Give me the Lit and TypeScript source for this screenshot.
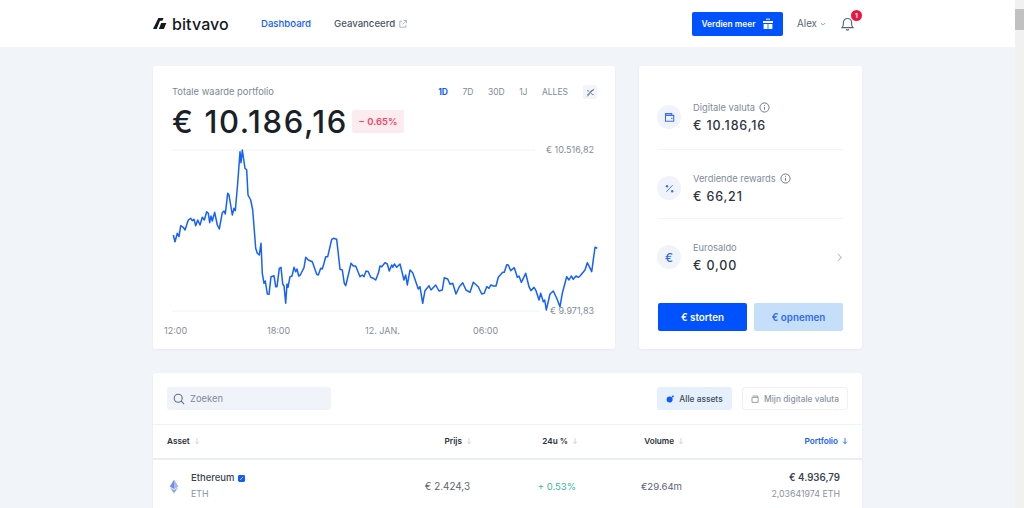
import {LitElement, css, html, svg} from 'lit';
import {customElement} from 'lit/decorators.js';

// traced from the chart, in page pixels x3: [x, y] pairs relative to (160,140) and (380,140)
const LEFT = [40,285,45,305,52,280,57,290,62,257,70,262,75,270,85,240,92,235,97,242,102,238,107,257,113,240,120,255,127,232,133,240,140,215,145,220,149,248,153,228,157,243,164,217,172,255,178,267,187,218,192,213,196,222,203,160,207,165,217,225,222,205,226,212,233,130,240,35,243,68,247,30,255,85,260,90,264,165,272,180,278,210,287,325,292,340,298,345,303,310,307,400,312,430,316,423,322,462,327,463,333,410,342,407,347,440,351,440,358,385,363,382,368,432,372,437,377,490,381,432,384,442,390,410,396,408,402,382,407,395,411,387,416,408,421,405,432,383,437,352,445,360,457,365,470,403,475,405,482,385,487,387,492,370,497,350,503,350,515,298,520,295,530,298,540,388,547,390,553,430,557,437,565,405,573,370,580,378,587,378,600,410,607,405,612,410,618,393,625,395,632,412,640,415,647,420,655,400];
const RIGHT = [0,378,5,380,15,368,22,372,28,393,35,375,38,382,43,372,50,382,60,372,72,420,77,405,82,435,90,390,98,398,115,447,120,440,128,490,135,452,147,437,153,450,167,435,177,453,187,450,193,413,203,417,210,433,218,430,228,462,238,440,248,428,258,450,270,457,280,427,295,440,305,462,313,460,320,440,327,445,332,435,340,438,348,438,355,412,368,397,373,397,380,374,385,375,392,392,403,383,412,412,417,408,424,427,430,415,437,400,447,440,453,452,462,442,468,452,477,480,482,460,490,485,494,480,499,510,510,462,520,453,530,475,540,500,547,460,560,410,567,420,574,408,580,418,588,408,595,412,600,408,615,390,622,368,635,395,645,322,652,325];

function toPoints(src: number[], ox: number) {
	const out: string[] = [];
	for (let i = 0; i < src.length; i += 2) {
		out.push(`${(ox + src[i] / 3).toFixed(1)},${(src[i + 1] / 3).toFixed(1)}`);
	}
	return out.join(' ');
}

// chart box starts at x=153, y=140 on the page
const LINE = `${toPoints(LEFT, 7)} ${toPoints(RIGHT, 227)}`;

const infoIcon = html`<svg class="info" viewBox="0 0 12 12" fill="none" stroke="#5f6f82" stroke-width="1">
	<circle cx="6" cy="6" r="5"></circle>
	<path d="M6 5.4v3M6 3.4v.9"></path>
</svg>`;

const sortIcon = (color = '#c3ccd8') => html`<svg class="sort" viewBox="0 0 8 10" fill="none" stroke=${color} stroke-width="1.1">
	<path d="M4 1v7.5M1.6 6L4 8.5 6.4 6"></path>
</svg>`;

@customElement('app-root')
export class AppRoot extends LitElement {
	static styles = css`
		:host {
			display: flex;
			width: 1024px;
			height: 508px;
			overflow: hidden;
			background: #f1f4f9;
			color: #1c222b;
			font-family: Inter, 'Liberation Sans', sans-serif;
			font-size: 10px;
		}

		.page {
			width: 1015px;
			flex: none;
		}

		.scrollbar {
			width: 9px;
			flex: none;
			background: #f1f1f1;
			padding-top: 9px;
			box-sizing: border-box;
		}

		.thumb {
			height: 21px;
			background: #c1c1c1;
		}

		header {
			height: 47px;
			background: #fff;
			display: flex;
			justify-content: center;
		}

		.bar {
			width: 709px;
			display: flex;
			align-items: center;
		}

		.logo {
			display: flex;
			align-items: center;
			gap: 5px;
			width: 108px;
			font-size: 16px;
			font-weight: 500;
			letter-spacing: 0.1px;
			color: #15191f;
		}

		.logo svg {
			width: 14px;
			height: 11px;
		}

		.nav {
			font-size: 9.6px;
			font-weight: 500;
			color: #4c5561;
			display: flex;
			align-items: center;
			gap: 4px;
		}

		.nav.active {
			color: #0f5cff;
			width: 73px;
		}

		.nav svg {
			width: 8px;
			height: 8px;
		}

		.right {
			margin-left: auto;
			display: flex;
			align-items: center;
		}

		.earn {
			width: 91px;
			height: 24px;
			border-radius: 2px;
			background: #0051ff;
			color: #fff;
			font-weight: 600;
			font-size: 8.4px;
			display: flex;
			align-items: center;
			justify-content: center;
			gap: 6px;
		}

		.earn svg {
			width: 12px;
			height: 12px;
		}

		.user {
			margin-left: 14px;
			width: 44px;
			display: flex;
			align-items: center;
			gap: 3px;
			color: #5a6470;
			font-size: 9.8px;
		}

		.user svg {
			width: 6px;
			height: 6px;
		}

		.bell {
			position: relative;
			width: 21px;
			height: 14px;
			margin-top: 1px;
		}

		.bell svg {
			width: 13px;
			height: 14px;
		}

		.badge {
			position: absolute;
			left: 10px;
			top: -7px;
			width: 11px;
			height: 11px;
			border-radius: 50%;
			background: #e8173f;
			color: #fff;
			font-size: 6.5px;
			font-weight: 700;
			display: flex;
			align-items: center;
			justify-content: center;
		}

		main {
			width: 709px;
			margin: 19px auto 0;
			display: flex;
			flex-direction: column;
			gap: 24px;
		}

		.top {
			display: flex;
			gap: 24px;
			height: 283px;
		}

		.card {
			background: #fff;
			border-radius: 3px;
			box-shadow: 0 1px 3px rgba(40, 60, 90, 0.05);
		}

		.portfolio {
			width: 462px;
			position: relative;
		}

		.head {
			padding: 19px 19px 0;
			height: 55px;
		}

		.head-top {
			display: flex;
			align-items: center;
			height: 14px;
		}

		.title {
			color: #7d8896;
			font-size: 9.4px;
			margin-bottom: 2px;
		}

		.tabs {
			margin-left: auto;
			margin-right: -1px;
			display: flex;
			align-items: center;
			color: #808b99;
			font-size: 8.5px;
		}

		.tabs span {
			margin-right: 14.5px;
		}

		.tabs .on {
			color: #0f5cff;
			font-weight: 700;
		}

		.tabs .last {
			margin-right: 15px;
		}

		.chart-toggle {
			width: 14px;
			height: 14px;
			border-radius: 2px;
			background: #f1f4f9;
			display: flex;
			align-items: center;
			justify-content: center;
		}

		.chart-toggle svg {
			width: 9px;
			height: 9px;
		}

		.value-row {
			display: flex;
			align-items: center;
			gap: 4px;
			margin-top: 5px;
		}

		.value {
			font-size: 31px;
			font-weight: 500;
			letter-spacing: 1.65px;
			line-height: 36px;
			color: #1a2028;
		}

		.change {
			width: 52px;
			height: 23px;
			margin-top: -2px;
			border-radius: 2px;
			background: #fdecef;
			color: #f0476a;
			font-weight: 600;
			font-size: 9.5px;
			display: flex;
			align-items: center;
			justify-content: center;
		}

		.chart {
			position: absolute;
			left: 0;
			top: 74px;
			width: 462px;
			height: 209px;
		}

		.chart svg {
			position: absolute;
			left: 0;
			top: 0;
			width: 462px;
			height: 209px;
		}

		.tick {
			position: absolute;
			color: #838d99;
			font-size: 9px;
			line-height: 12px;
			white-space: nowrap;
		}

		.balances {
			width: 223px;
			padding: 19px 19px 18px 18px;
			box-sizing: border-box;
			display: flex;
			flex-direction: column;
		}

		.balance {
			height: 65px;
			box-sizing: border-box;
			display: flex;
			align-items: center;
			gap: 12px;
			border-bottom: 1px solid #f3f5f8;
		}

		.balance + .balance {
			height: 69px;
			padding-top: 8px;
		}

		.balance.last {
			border-bottom: none;
			height: 76px;
			padding-top: 0;
		}

		.round {
			width: 24px;
			height: 24px;
			border-radius: 50%;
			background: #f0f3f9;
			display: flex;
			align-items: center;
			justify-content: center;
			color: #2f6bf5;
			font-size: 12px;
			font-weight: 500;
			flex: none;
		}

		.round svg {
			width: 11px;
			height: 11px;
		}

		.label {
			color: #808b99;
			font-size: 9.3px;
			display: flex;
			align-items: center;
			gap: 4px;
			line-height: 14px;
		}

		.info {
			width: 11px;
			height: 11px;
		}

		.amount {
			font-size: 12.5px;
			font-weight: 500;
			letter-spacing: 0.85px;
			color: #2c333d;
			line-height: 16px;
			margin-top: 3px;
		}

		.chev {
			margin-left: auto;
			width: 7px;
			height: 9px;
		}

		.actions {
			margin: auto 0 0 1px;
			display: flex;
			gap: 7px;
		}

		.btn {
			flex: 1;
			height: 28px;
			border-radius: 2px;
			background: #0051ff;
			color: #fff;
			font-weight: 600;
			font-size: 9.8px;
			display: flex;
			align-items: center;
			justify-content: center;
		}

		.btn.light {
			background: #c5dffa;
			color: #2f6bf0;
		}

		.assets {
			height: 200px;
		}

		.tools {
			height: 52px;
			padding: 14px 14px 0;
			box-sizing: border-box;
			display: flex;
			border-bottom: 1px solid #eff2f6;
		}

		.search {
			width: 164px;
			height: 23px;
			border-radius: 3px;
			background: #f0f3f9;
			display: flex;
			align-items: center;
			gap: 5px;
			padding-left: 6px;
			box-sizing: border-box;
			color: #808b99;
			font-size: 9.4px;
		}

		.search svg {
			width: 12px;
			height: 12px;
		}

		.filter {
			height: 23px;
			border-radius: 3px;
			box-sizing: border-box;
			display: flex;
			align-items: center;
			justify-content: center;
			gap: 5px;
			font-size: 8.4px;
			font-weight: 500;
		}

		.filter.on {
			margin-left: auto;
			width: 75px;
			background: #e5f0fc;
			color: #414b57;
		}

		.filter.off {
			margin-left: 10px;
			width: 106px;
			border: 1px solid #eef1f5;
			color: #8b95a2;
		}

		.filter svg {
			width: 8px;
			height: 8px;
		}

		.grid {
			display: grid;
			grid-template-columns: 1fr 106px 106px 106px 164px;
			padding: 0 14px;
			justify-items: end;
			align-items: center;
			box-sizing: border-box;
		}

		.cols {
			height: 35px;
			padding-bottom: 1px;
			border-bottom: 2px solid #e9eef4;
			font-size: 8.2px;
			font-weight: 600;
			color: #2b323b;
		}

		.col {
			display: flex;
			align-items: center;
			gap: 4px;
		}

		.col:first-child {
			justify-self: start;
		}

		.col.blue {
			color: #0f5cff;
		}

		.sort {
			width: 6px;
			height: 8px;
		}

		.row {
			height: 52px;
			font-size: 9.9px;
			color: #5b6570;
		}

		.price {
			padding-right: 2px;
		}

		.name {
			justify-self: start;
			display: flex;
			align-items: center;
			gap: 12px;
		}

		.name > svg {
			width: 10px;
			height: 15px;
			margin-left: 2px;
		}

		.coin {
			font-weight: 500;
			font-size: 9.5px;
			color: #3c444f;
			display: flex;
			align-items: center;
			gap: 3px;
			line-height: 14px;
		}

		.coin svg {
			width: 7px;
			height: 7px;
		}

		.sym {
			color: #8a94a0;
			font-size: 8.8px;
			line-height: 14px;
			margin-top: 2px;
		}

		.up {
			color: #35b99a;
			font-size: 9.5px;
			padding-right: 2px;
		}

		.vol {
			font-size: 9.6px;
			padding-right: 2px;
		}

		.hold {
			text-align: right;
			padding-right: 8px;
		}

		.hold b {
			display: block;
			font-weight: 600;
			font-size: 9.7px;
			color: #3c444f;
			line-height: 14px;
		}

		.hold span {
			display: block;
			color: #8a94a0;
			font-size: 8.8px;
			line-height: 14px;
			margin-top: 2px;
		}
	`;

	private renderChart() {
		return html`<div class="chart">
			<svg viewBox="0 0 462 209" fill="none">
				${svg`<path d="M19 10H382M19 171H387" stroke="#f0f2f6" stroke-width="1"></path>
				<polyline points=${LINE} stroke="#1560ff" stroke-width="1.5" stroke-linejoin="round"></polyline>`}
			</svg>
			<span class="tick" style="left:393px;top:4px">€ 10.516,82</span>
			<span class="tick" style="left:397px;top:165px">€ 9.971,83</span>
			<span class="tick" style="left:11px;top:185px">12:00</span>
			<span class="tick" style="left:114px;top:185px">18:00</span>
			<span class="tick" style="left:212px;top:185px">12. JAN.</span>
			<span class="tick" style="left:320px;top:185px">06:00</span>
		</div>`;
	}

	render() {
		return html`
			<div class="page">
				<header>
					<div class="bar">
						<div class="logo">
							<svg viewBox="0 0 14 11" fill="#15191f">
								<path d="M0 11L5.4 0h5.2L9.3 2.8H7L3.7 11z"></path>
								<path d="M5.8 11l2.4-6h5.2L10.8 11z"></path>
							</svg>
							<span>bitvavo</span>
						</div>
						<div class="nav active">Dashboard</div>
						<div class="nav">
							Geavanceerd
							<svg viewBox="0 0 8 8" fill="none" stroke="#9aa5b1" stroke-width="0.8">
								<path d="M3.2 1.2H.8v6h6V4.8M4.6.5h2.9v2.9M7.3.7L3.6 4.4"></path>
							</svg>
						</div>
						<div class="right">
							<div class="earn">
								Verdien meer
								<svg viewBox="0 0 12 12" fill="#fff">
									<path d="M1 3h10v2H1zM1.6 6h4v5h-4zM6.4 6h4v5h-4z"></path>
									<path d="M4 1.2h4" stroke="#fff" stroke-width="1"></path>
								</svg>
							</div>
							<div class="user">
								Alex
								<svg viewBox="0 0 6 6" fill="none" stroke="#8a94a0" stroke-width="0.9"><path d="M.8 2l2.2 2.2L5.2 2"></path></svg>
							</div>
							<div class="bell">
								<svg viewBox="0 0 13 14" fill="none" stroke="#5a6470" stroke-width="1.1">
									<path d="M1 10.6c1-.9 1.4-1.8 1.4-3.6V5.6a4.1 4.1 0 018.2 0V7c0 1.8.4 2.7 1.4 3.6zM5 12.4c.8.8 2.2.8 3 0"></path>
								</svg>
								<span class="badge">1</span>
							</div>
						</div>
					</div>
				</header>
				<main>
					<div class="top">
						<section class="card portfolio">
							<div class="head">
								<div class="head-top">
									<span class="title">Totale waarde portfolio</span>
									<div class="tabs">
										<span class="on">1D</span>
										<span>7D</span>
										<span>30D</span>
										<span>1J</span>
										<span class="last">ALLES</span>
										<div class="chart-toggle">
											<svg viewBox="0 0 9 9" fill="none" stroke="#5f6f82" stroke-width="0.9">
												<path d="M1 6.8c1.6 0 2-1 2.6-2.2S5 2.4 7.6 2.4M1 2.6c1.2 0 1.8.4 2.2 1M5.2 5.4c.5.8 1.2 1.2 2.4 1.2M1.4 8.4L7.8.8"></path>
											</svg>
										</div>
									</div>
								</div>
								<div class="value-row">
									<span class="value">€ 10.186,16</span>
									<span class="change">− 0.65%</span>
								</div>
							</div>
							${this.renderChart()}
						</section>
						<section class="card balances">
							<div class="balance">
								<div class="round">
									<svg viewBox="0 0 11 11" fill="none" stroke="#3b6ff0" stroke-width="1.1">
										<path d="M1.5 3v6.2h8.2V3.4H1.5zM1.5 3.2V1.6h6.2v1.6"></path>
										<path d="M7.2 6.4h1.2"></path>
									</svg>
								</div>
								<div>
									<div class="label">Digitale valuta ${infoIcon}</div>
									<div class="amount">€ 10.186,16</div>
								</div>
							</div>
							<div class="balance">
								<div class="round">
									<svg viewBox="0 0 11 11" fill="#3b6ff0">
										<path d="M8.6 2.2L2.4 8.8" stroke="#3b6ff0" stroke-width="0.9"></path>
										<circle cx="3" cy="3.2" r="1.2"></circle>
										<circle cx="8.2" cy="8.2" r="1.2"></circle>
									</svg>
								</div>
								<div>
									<div class="label">Verdiende rewards ${infoIcon}</div>
									<div class="amount">€ 66,21</div>
								</div>
							</div>
							<div class="balance last">
								<div class="round">€</div>
								<div>
									<div class="label">Eurosaldo</div>
									<div class="amount">€ 0,00</div>
								</div>
								<svg class="chev" viewBox="0 0 7 9" fill="none" stroke="#b4bec9" stroke-width="1.1"><path d="M2 1l3.2 3.5L2 8"></path></svg>
							</div>
							<div class="actions">
								<div class="btn">€ storten</div>
								<div class="btn light">€ opnemen</div>
							</div>
						</section>
					</div>
					<section class="card assets">
						<div class="tools">
							<div class="search">
								<svg viewBox="0 0 12 12" fill="none" stroke="#5f6f82" stroke-width="1.1">
									<circle cx="5.2" cy="5.2" r="4"></circle>
									<path d="M8.2 8.2l3 3"></path>
								</svg>
								Zoeken
							</div>
							<div class="filter on">
								<svg viewBox="0 0 8 8" fill="#0f5cff">
									<circle cx="3.6" cy="4.6" r="3"></circle>
									<circle cx="6.8" cy="1.4" r="1"></circle>
								</svg>
								Alle assets
							</div>
							<div class="filter off">
								<svg viewBox="0 0 8 8" fill="none" stroke="#8b95a2" stroke-width="0.9">
									<path d="M1 2.4v5h6.2v-5zM1.6 1h5v1.4"></path>
								</svg>
								Mijn digitale valuta
							</div>
						</div>
						<div class="grid cols">
							<div class="col">Asset ${sortIcon()}</div>
							<div class="col">Prijs ${sortIcon()}</div>
							<div class="col">24u % ${sortIcon()}</div>
							<div class="col">Volume ${sortIcon()}</div>
							<div class="col blue">Portfolio ${sortIcon('#0f5cff')}</div>
						</div>
						<div class="grid row">
							<div class="name">
								<svg viewBox="0 0 12 16">
									<path d="M6 0L1 8l5 3 5-3z" fill="#6f8cf0"></path>
									<path d="M6 0v11l5-3z" fill="#a9bbf6"></path>
									<path d="M1 9.2L6 16l5-6.8-5 3z" fill="#8aa2f3"></path>
								</svg>
								<div>
									<div class="coin">
										Ethereum
										<svg viewBox="0 0 7 7">
											<rect width="7" height="7" rx="1.4" fill="#0f5cff"></rect>
											<path d="M2 5l3-3" stroke="#fff" stroke-width="0.7"></path>
										</svg>
									</div>
									<div class="sym">ETH</div>
								</div>
							</div>
							<div class="price">€ 2.424,3</div>
							<div class="up">+ 0.53%</div>
							<div class="vol">€29.64m</div>
							<div class="hold">
								<b>€ 4.936,79</b>
								<span>2,03641974 ETH</span>
							</div>
						</div>
					</section>
				</main>
			</div>
			<div class="scrollbar"><div class="thumb"></div></div>
		`;
	}
}
